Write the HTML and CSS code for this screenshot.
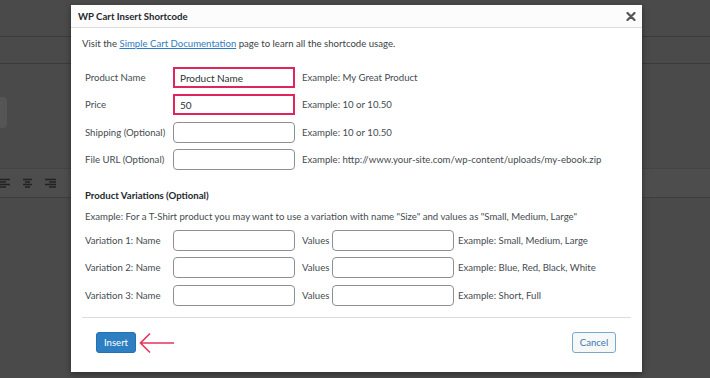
FILE: index.html
```html
<!DOCTYPE html>
<html lang="en">
<head>
  <meta charset="UTF-8" />
  <title>WP Cart Insert Shortcode</title>
  <link rel="stylesheet" href="styles.css">
</head>
<body>
  <div class="editor">
    <div class="bg-top"></div>
    <div class="bg-tabs"></div>
    <div class="bg-area">
      <div class="bg-box"></div>
    </div>
    <div class="bg-toolbar">
      <svg width="11" height="10" viewBox="0 0 11 10">
        <path d="M0 1.5 H11 M0 4 H7 M0 6.5 H11 M0 9 H7" stroke="#222" stroke-width="1.3"/>
      </svg>
      <svg width="11" height="10" viewBox="0 0 11 10">
        <path d="M1 1.5 H10 M3 4 H8 M1 6.5 H10 M3 9 H8" stroke="#222" stroke-width="1.3"/>
      </svg>
      <svg width="11" height="10" viewBox="0 0 11 10">
        <path d="M0 1.5 H11 M4 4 H11 M0 6.5 H11 M4 9 H11" stroke="#222" stroke-width="1.3"/>
      </svg>
    </div>
  </div>

  <div class="modal">
    <div class="modal-header">
      <span class="modal-title">WP Cart Insert Shortcode</span>
      <svg class="close" width="10" height="9" viewBox="0 0 10 9">
        <path d="M1.5 1 L8.5 8 M8.5 1 L1.5 8" stroke="#555" stroke-width="2.2" stroke-linecap="round"/>
      </svg>
    </div>

    <div class="modal-body">
      <p class="intro">Visit the <a href="#">Simple Cart Documentation</a> page to learn all the shortcode usage.</p>

      <div class="form-grid">
        <label>Product Name</label>
        <input class="field marked" type="text" value="Product Name">
        <span class="hint">Example: My Great Product</span>

        <label>Price</label>
        <input class="field marked" type="text" value="50">
        <span class="hint">Example: 10 or 10.50</span>

        <label>Shipping (Optional)</label>
        <input class="field" type="text">
        <span class="hint">Example: 10 or 10.50</span>

        <label>File URL (Optional)</label>
        <input class="field" type="text">
        <span class="hint">Example: http://www.your-site.com/wp-content/uploads/my-ebook.zip</span>
      </div>

      <h3>Product Variations (Optional)</h3>
      <p class="var-note">Example: For a T-Shirt product you may want to use a variation with name "Size" and values as "Small, Medium, Large"</p>

      <div class="var-grid">
        <label>Variation 1: Name</label>
        <input class="field" type="text">
        <span class="values">Values</span>
        <input class="field" type="text">
        <span class="hint">Example: Small, Medium, Large</span>

        <label>Variation 2: Name</label>
        <input class="field" type="text">
        <span class="values">Values</span>
        <input class="field" type="text">
        <span class="hint">Example: Blue, Red, Black, White</span>

        <label>Variation 3: Name</label>
        <input class="field" type="text">
        <span class="values">Values</span>
        <input class="field" type="text">
        <span class="hint">Example: Short, Full</span>
      </div>

      <div class="footer">
        <div class="insert-wrap">
          <button class="btn-primary">Insert</button>
          <svg class="arrow" width="36" height="22" viewBox="0 0 36 22">
            <path d="M35 11 H2 M11 1.5 L1.5 11 L11 20.5" fill="none" stroke="#e8325c" stroke-width="1.6"/>
          </svg>
        </div>
        <button class="btn-secondary">Cancel</button>
      </div>
    </div>
  </div>
</body>
</html>
```

FILE: styles.css
```css
body {
  margin: 0;
  background-color: #4a4a4a;
  font-family: Lato, 'Open Sans', sans-serif;
  font-size: 9.6px;
  color: #3a3f44;
  height: 378px;
  overflow: hidden;
  position: relative;
}

.bg-top {
  height: 36px;
  border-bottom: 1px solid #3a3a3a;
}

.bg-tabs {
  height: 26px;
  border-bottom: 1px solid #3a3a3a;
}

.bg-area {
  height: 104px;
  padding-top: 33px;
  box-sizing: border-box;
}

.bg-box {
  width: 7px;
  height: 31px;
  background-color: #555;
  border-radius: 0 4px 4px 0;
}

.bg-toolbar {
  height: 28px;
  border-top: 1px solid #444;
  border-bottom: 1px solid #3e3e3e;
  background-color: #4d4d4d;
  display: flex;
  align-items: center;
  gap: 12px;
  margin-left: -1px;
}

/* dialog */
.modal {
  position: absolute;
  left: 71px;
  top: 5px;
  width: 571px;
  height: 367px;
  background-color: #fff;
  box-shadow: 0 2px 6px rgba(0, 0, 0, 0.4);
}

.modal-header {
  height: 22px;
  background-color: #fcfcfc;
  border-bottom: 1px solid #dcdcde;
  display: flex;
  align-items: center;
  justify-content: space-between;
  padding: 0 6px 0 7px;
}

.modal-title {
  font-weight: bold;
  font-size: 9.6px;
  color: #23282d;
}

.modal-body {
  padding: 0 11px;
}

.intro {
  margin: 0;
  line-height: 16px;
  padding-top: 8px;
}

.intro a {
  color: #2f7cc0;
}

.form-grid {
  display: grid;
  grid-template-columns: 81px 122px 1fr;
  column-gap: 7px;
  row-gap: 6.3px;
  align-items: center;
  margin-top: 15px;
  padding-left: 3px;
}

label,
.hint,
.values {
  color: #464b50;
  white-space: nowrap;
}

.field {
  height: 21px;
  box-sizing: border-box;
  border: 1px solid #8c8f94;
  border-radius: 4px;
  padding: 0 6px;
  font-family: Lato, 'Open Sans', sans-serif;
  font-size: 10px;
  color: #2c3338;
  margin: 0;
  width: 122px;
}

.field.marked {
  border: 2px solid #e0245e;
  border-radius: 0;
  padding: 0 5px;
}

h3 {
  margin: 18px 0 0 3px;
  font-size: 9.6px;
  line-height: 16px;
  color: #23282d;
}

.var-note {
  margin: 5px 0 0 3px;
  line-height: 16px;
  color: #464b50;
  white-space: nowrap;
}

.var-grid {
  display: grid;
  grid-template-columns: 88px 122px 37px 122px 1fr;
  row-gap: 6.5px;
  align-items: center;
  margin-top: 5px;
  padding-left: 3px;
}

.var-grid .values {
  padding-left: 7px;
}

.var-grid .hint {
  padding-left: 4px;
}

.footer {
  margin-top: 11px;
  border-top: 1px solid #dcdcde;
  padding: 14px 15px 0 14px;
  display: flex;
  justify-content: space-between;
  align-items: center;
}

.insert-wrap {
  display: flex;
  align-items: center;
  gap: 3px;
}

.btn-primary,
.btn-secondary {
  height: 21px;
  font-family: Lato, 'Open Sans', sans-serif;
  font-size: 9.6px;
  border-radius: 3px;
  padding: 0;
  cursor: pointer;
}

.btn-primary {
  width: 40px;
  background-color: #2e7fc1;
  border: 1px solid #2271b1;
  color: #fff;
}

.btn-secondary {
  width: 44px;
  background-color: #f6f7f7;
  border: 1px solid #76a8d2;
  color: #3a78b2;
}
```
